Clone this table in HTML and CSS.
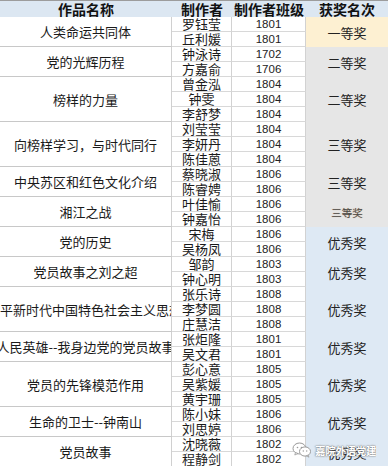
FILE: index.html
```html
<!DOCTYPE html>
<html lang="zh">
<head>
<meta charset="utf-8">
<link rel="stylesheet" href="styles.css">
</head>
<body>
<div class="sheet">
  <div class="hd">作品名称</div><div class="hd">制作者</div><div class="hd">制作者班级</div><div class="hd">获奖名次</div>

  <div class="work r2">人类命运共同体</div><div class="who">罗钰莹</div><div class="cls">1801</div><div class="award r2 gold">一等奖</div>
  <div class="who">丘利媛</div><div class="cls">1801</div>

  <div class="work r2">党的光辉历程</div><div class="who">钟泳诗</div><div class="cls">1702</div><div class="award r2 grey">二等奖</div>
  <div class="who">方嘉俞</div><div class="cls">1706</div>

  <div class="work r3">榜样的力量</div><div class="who">曾金泓</div><div class="cls">1804</div><div class="award r3 grey">二等奖</div>
  <div class="who">钟雯</div><div class="cls">1804</div>
  <div class="who">李舒梦</div><div class="cls">1804</div>

  <div class="work r3">向榜样学习，与时代同行</div><div class="who">刘莹莹</div><div class="cls">1804</div><div class="award r3 grey">三等奖</div>
  <div class="who">李妍丹</div><div class="cls">1804</div>
  <div class="who">陈佳蒽</div><div class="cls">1804</div>

  <div class="work r2">中央苏区和红色文化介绍</div><div class="who">蔡晓淑</div><div class="cls">1806</div><div class="award r2 grey">三等奖</div>
  <div class="who">陈睿娉</div><div class="cls">1806</div>

  <div class="work r2">湘江之战</div><div class="who">叶佳愉</div><div class="cls">1806</div><div class="award r2 grey small">三等奖</div>
  <div class="who">钟嘉怡</div><div class="cls">1806</div>

  <div class="work r2">党的历史</div><div class="who">宋梅</div><div class="cls">1806</div><div class="award r2 blue">优秀奖</div>
  <div class="who">吴杨凤</div><div class="cls">1806</div>

  <div class="work r2">党员故事之刘之超</div><div class="who">邹韵</div><div class="cls">1803</div><div class="award r2 blue">优秀奖</div>
  <div class="who">钟心明</div><div class="cls">1803</div>

  <div class="work r3 lead"><span>平新时代中国特色社会主义思想</span></div><div class="who">张乐诗</div><div class="cls">1808</div><div class="award r3 blue">优秀奖</div>
  <div class="who">李梦圆</div><div class="cls">1808</div>
  <div class="who">庄慧洁</div><div class="cls">1808</div>

  <div class="work r2"><span>人民英雄--我身边党的党员故事</span></div><div class="who">张炬隆</div><div class="cls">1801</div><div class="award r2 blue">优秀奖</div>
  <div class="who">吴文君</div><div class="cls">1801</div>

  <div class="work r3">党员的先锋模范作用</div><div class="who">彭心意</div><div class="cls">1805</div><div class="award r3 blue">优秀奖</div>
  <div class="who">吴紫媛</div><div class="cls">1805</div>
  <div class="who">黄宇珊</div><div class="cls">1805</div>

  <div class="work r2">生命的卫士--钟南山</div><div class="who">陈小妹</div><div class="cls">1806</div><div class="award r2 blue">优秀奖</div>
  <div class="who">刘思婷</div><div class="cls">1806</div>

  <div class="work r2">党员故事</div><div class="who">沈晓薇</div><div class="cls">1802</div><div class="award r2 blue">优秀奖</div>
  <div class="who">程静剑</div><div class="cls">1802</div>

  <div class="mark">
    <svg class="mark-icon" width="20" height="16" viewBox="0 0 20 16">
      <ellipse cx="7.5" cy="6.5" rx="6.5" ry="5.5" fill="#fff" stroke="#9a9a9a" stroke-width="1"/>
      <path d="M3.5 10.5 L2.8 13 L6 11.5 Z" fill="#fff" stroke="#9a9a9a" stroke-width="0.8"/>
      <ellipse cx="13" cy="9.5" rx="5.5" ry="4.6" fill="#fff" stroke="#9a9a9a" stroke-width="1"/>
      <path d="M16 13 L17 15.2 L14.5 13.8 Z" fill="#fff" stroke="#9a9a9a" stroke-width="0.8"/>
      <circle cx="5.5" cy="5.5" r="0.8" fill="#9a9a9a"/>
      <circle cx="9.5" cy="5.5" r="0.8" fill="#9a9a9a"/>
      <circle cx="11.3" cy="9" r="0.7" fill="#9a9a9a"/>
      <circle cx="14.7" cy="9" r="0.7" fill="#9a9a9a"/>
    </svg>
    <span class="mark-text">嘉院外语党建</span>
  </div>
</div>
</body>
</html>
```

FILE: styles.css
```css
* { box-sizing: border-box; }
html, body { margin: 0; padding: 0; background: #fff; }
body {
  font-family: "Noto Sans CJK SC", "Liberation Sans", sans-serif;
  color: #1a1a1a;
}
.sheet {
  position: relative;
  display: grid;
  grid-template-columns: 172px 60px 74px 82px;
  grid-template-rows: 16px repeat(30, 15px);
  border-top: 1px solid #9c9c9c;
  width: 388px;
}
.sheet > div {
  display: flex;
  align-items: center;
  justify-content: center;
  white-space: nowrap;
  overflow: hidden;
}
.sheet > .hd {
  overflow: visible;
  background: #dce7f2;
  font-weight: bold;
  font-size: 14px;
  line-height: 15px;
  color: #111;
}
.r2 { grid-row: span 2; }
.r3 { grid-row: span 3; }
.work {
  font-size: 13px;
  line-height: 15px;
  border-right: 1px solid #d0d0d0;
  border-bottom: 1px solid #c8c8c8;
}
.work.lead { justify-content: flex-start; }
.work span { flex: none; }
.who {
  font-size: 13px;
  line-height: 14px;
  border-right: 1px solid #d2d2d2;
  border-bottom: 1px solid #d8d8d8;
}
.cls {
  font-family: "Liberation Sans", sans-serif;
  font-size: 11.5px;
  line-height: 14px;
  border-right: 1px solid #d2d2d2;
  border-bottom: 1px solid #d8d8d8;
  color: #222;
}
.award {
  font-size: 13px;
  line-height: 15px;
  color: #222;
}
.gold { background: #fdf0d2; }
.grey { background: #e6e6e6; }
.blue { background: #dee9f4; }
.small {
  font-size: 10.5px;
  color: #4a4a4a;
  text-shadow: 0 0 1px #c9a27a;
}
.mark {
  position: absolute;
  left: 292px;
  top: 441px;
  display: flex;
  align-items: center;
  gap: 3px;
}
.mark-icon { display: block; }
.mark-text {
  font-size: 10.5px;
  font-weight: bold;
  color: #fff;
  letter-spacing: -0.3px;
  text-shadow: 0 0 1px #666, 0 0 2px #777;
}
```
